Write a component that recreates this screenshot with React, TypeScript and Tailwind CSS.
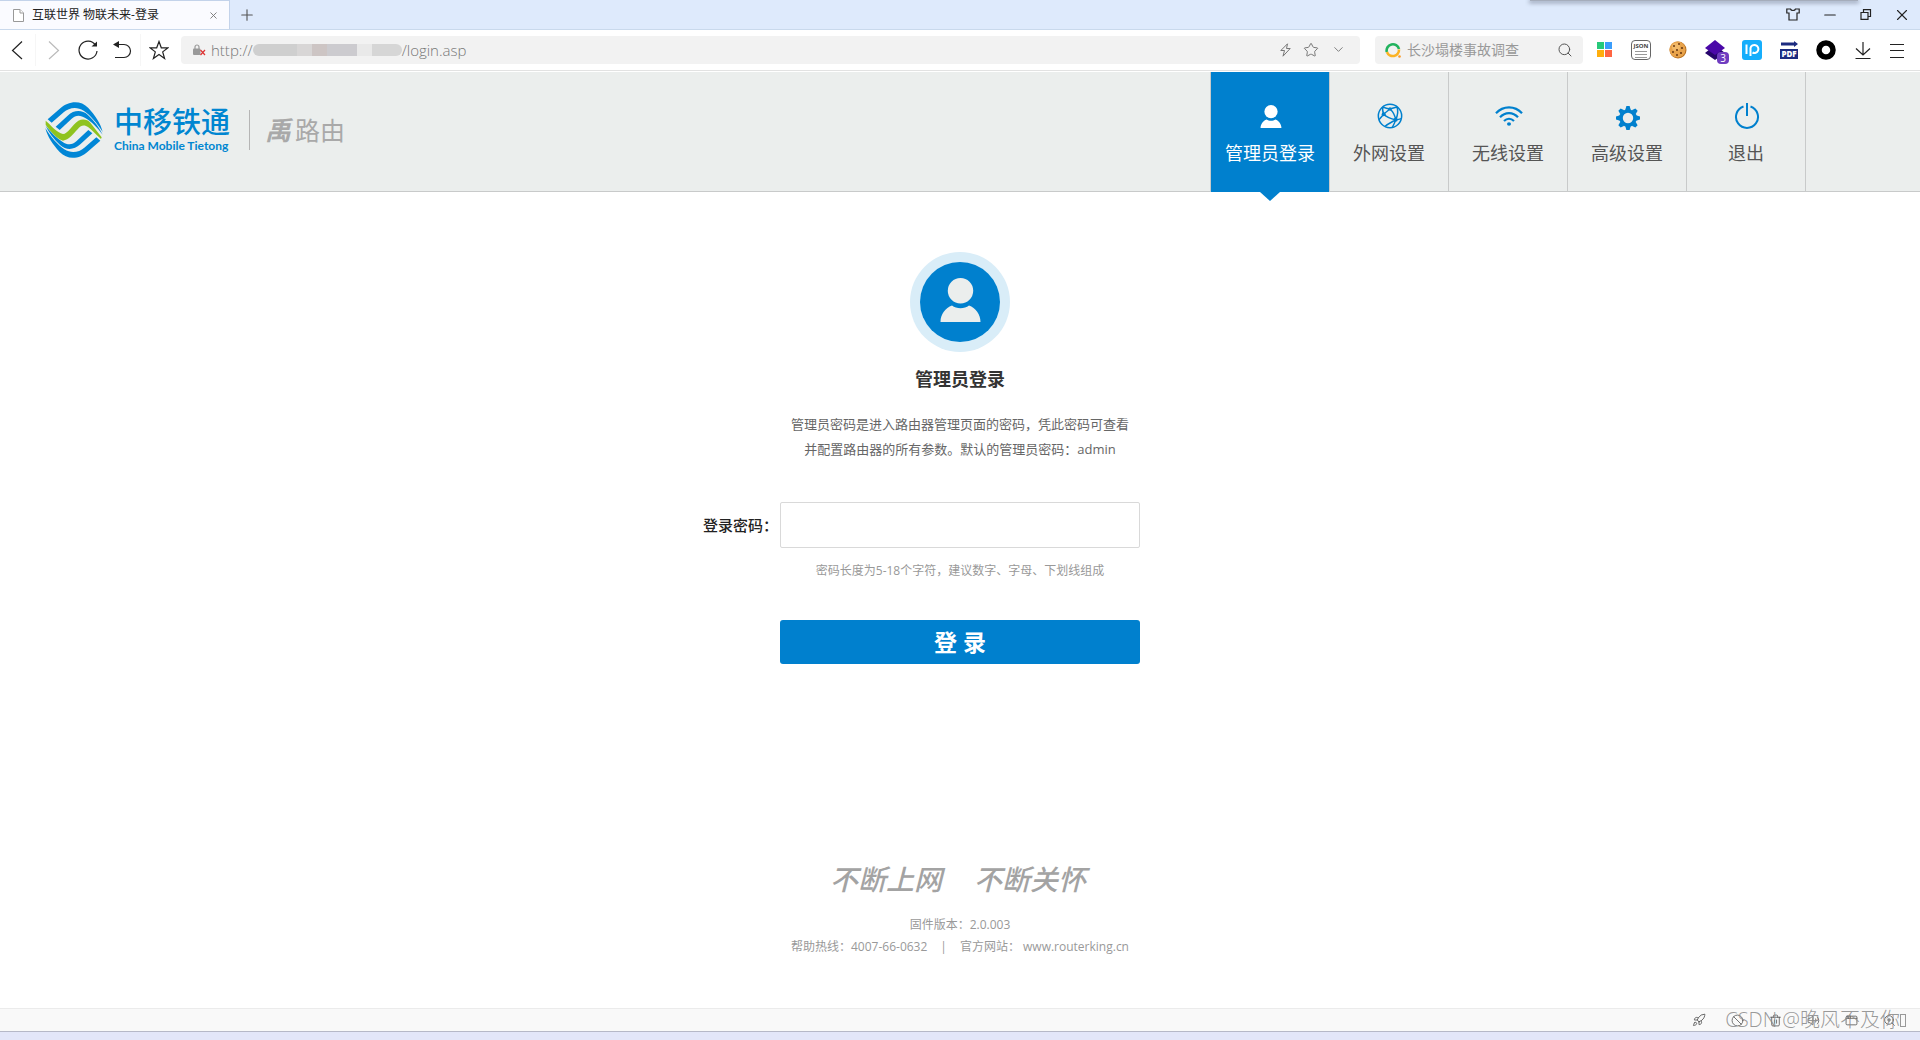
import { ReactNode, useState } from "react";
import { ChevronDown, Minus, Plus, Rocket, Search, Shirt, Star, Trash2, Volume2, X, ZoomIn, AppWindow, Ban } from "lucide-react";

const NAV_ITEMS: { label: string, icon: ReactNode }[] = [
    { label: "管理员登录", icon: <PersonIcon className="w-[22px] h-[23px] text-white" /> },
    { label: "外网设置", icon: <GlobeIcon /> },
    { label: "无线设置", icon: <WifiIcon /> },
    { label: "高级设置", icon: <GearIcon /> },
    { label: "退出", icon: <PowerIcon /> },
];

export default function App() {
    return <div className="min-h-screen flex flex-col bg-white font-['Open_Sans','Noto_Sans_CJK_SC',sans-serif]">
        <TabStrip />
        <Toolbar />
        <SiteHeader />
        <main className="flex-1 flex flex-col pt-[60px]">
            <LoginForm />
            <SiteFooter />
        </main>
        <StatusBar />
    </div>
}

/* Browser chrome */

function TabStrip() {
    return <div className="relative h-[30px] flex items-stretch bg-[#deeafc] border-b border-[#c9d9ec]">
        <div className="w-[230px] flex items-center pl-[13px] pr-[10px] bg-[#fafbff] border-t border-r border-[#c3d3ea]">
            <svg className="w-[11px] h-[13px]" viewBox="0 0 11 13" fill="#fff" stroke="#999">
                <path d="M.5 .5H7L10.500 4V12.500H.5Z" />
                <path d="M7 .5V4H10.500" />
            </svg>
            <span className="ml-2 flex-1 text-xs text-[#222]">互联世界 物联未来-登录</span>
            <button aria-label="关闭标签页"><X size={11} color="#777" strokeWidth={2} /></button>
        </div>
        <button aria-label="新建标签页" className="ml-2"><Plus size={18} color="#555" strokeWidth={1.5} /></button>
        <div className="ml-auto mr-[9px] flex items-center gap-[21px] text-[#222]">
            <button aria-label="皮肤">
                <svg className="w-[14px] h-[13px]" viewBox="0 0 14 13" fill="none" stroke="currentColor" strokeWidth="1.200">
                    <path d="M.8 1H4.500C5 3 9 3 9.500 1H13.200V5H11V12H3V5H.8Z" />
                </svg>
            </button>
            <button aria-label="最小化"><Minus size={18} strokeWidth={1.5} /></button>
            <button aria-label="还原">
                <svg className="w-[12px] h-[11px]" viewBox="0 0 12 11" fill="none" stroke="currentColor" strokeWidth="1.200">
                    <path d="M1 3.500H8V10.400H1ZM3.500 3.500V.6H10.500V7.500H8" />
                </svg>
            </button>
            <button aria-label="关闭"><X size={18} strokeWidth={1.5} /></button>
        </div>
        <div className="absolute top-0 right-[62px] w-[328px] h-px bg-[#a5adbb] shadow-[0_1px_4px_1px_#8d97aa]" />
    </div>
}

function Toolbar() {
    return <div className="h-[42px] pb-px border-b border-white bg-white">
        <div className="h-[41px] flex items-center pl-[7px] pr-[10px] pb-px border-b border-[#e2e2e2]">
            <ToolButton label="后退">
                <path d="M15 1.500L5.500 10.500L15 19" />
            </ToolButton>
            <span className="w-px h-8 mx-2 bg-[#f6f6f6]" />
            <ToolButton label="前进" className="text-[#bbb]">
                <path d="M5 1.500L14.500 10.500L5 19" />
            </ToolButton>
            <span className="w-[14px]" />
            <ToolButton label="刷新">
                <path d="M17.500 5A9 9 0 1 0 19 11" />
                <path d="M19 1.500V6.500H13.500Z" fill="currentColor" stroke="none" />
            </ToolButton>
            <span className="w-[14px]" />
            <ToolButton label="恢复">
                <path d="M4 4.500H12A6.500 6.500 0 0 1 12 17.500H3" />
                <path d="M1 4.500L7 1V8Z" fill="currentColor" stroke="none" />
            </ToolButton>
            <span className="w-px h-8 mx-2 bg-[#f6f6f6]" />
            <ToolButton label="收藏">
                <path d="M10 1.500L12.300 7.800H19L13.700 11.900L15.600 18.500L10 14.600L4.400 18.500L6.300 11.900L1 7.800H7.700Z" />
            </ToolButton>
            <AddressBar />
            <SearchBox />
            <Extensions />
        </div>
    </div>
}

function ToolButton({ label, className, children }: { label: string, className?: string, children: ReactNode }) {
    return <button aria-label={label} className={className ?? "text-[#222]"}>
        <svg className="size-5" viewBox="0 0 20 20" fill="none" stroke="currentColor" strokeWidth="1.200">{children}</svg>
    </button>
}

function AddressBar() {
    return <div className="ml-3 flex-1 h-7 flex items-center pl-3 pr-[14px] rounded-sm bg-[#f2f2f2] text-[#777]">
        <svg className="w-[13px] h-[12px]" viewBox="0 0 13 12">
            <path d="M2 5V3A2 2 0 0 1 6 3V5" fill="none" stroke="#999" strokeWidth="1.200" />
            <rect x="0" y="4.500" width="7.500" height="6.500" rx="1" fill="#999" />
            <path d="M7.500 6L12 11M12 6L7.500 11" stroke="#d33" strokeWidth="1.200" />
        </svg>
        <span className="ml-[5px] text-[15px] leading-7 font-light">http://</span>
        <span className="h-3 w-[149px] flex rounded-md overflow-hidden">
            <span className="flex-[3] bg-[#cfcfcf]" />
            <span className="flex-[1] bg-[#d8d6d6]" />
            <span className="flex-[1] bg-[#cdc5c4]" />
            <span className="flex-[2] bg-[#cccbcf]" />
            <span className="flex-[1] bg-[#e9e9e9]" />
            <span className="flex-[2] bg-[#d6d6d6]" />
        </span>
        <span className="text-[15px] leading-7 font-light">/login.asp</span>
        <span className="ml-auto flex items-center gap-3">
            <svg className="w-[11px] h-[14px]" viewBox="0 0 11 14" fill="none" stroke="currentColor">
                <path d="M7.500 .8L.8 7.500H4.500L3 13.200L10.200 5.500H6.500Z" />
            </svg>
            <Star size={16} strokeWidth={1.5} />
            <ChevronDown size={15} strokeWidth={1.5} />
        </span>
    </div>
}

function SearchBox() {
    return <div className="ml-[15px] w-[208px] h-7 flex items-center pl-[10px] pr-[10px] rounded-sm bg-[#f2f2f2]">
        <svg className="w-4 h-4" viewBox="0 0 16 16" fill="none" strokeWidth="2.600">
            <path d="M1.800 10A6.200 6.200 0 1 1 14 7" stroke="#22b35e" />
            <path d="M14 7.500A6.200 6.200 0 0 1 2 10" stroke="#fbb324" />
            <circle cx="14.500" cy="14.500" r="1.300" fill="#fb9a24" />
        </svg>
        <input
            aria-label="搜索" placeholder="长沙塌楼事故调查"
            className="ml-[6px] flex-1 min-w-0 bg-transparent outline-none text-sm placeholder:text-[#999]"
        />
        <Search size={16} color="#555" strokeWidth={1.5} />
    </div>
}

function Extensions() {
    return <div className="ml-[11px] flex items-center gap-[17px]">
        <button aria-label="应用" className="size-5 flex items-center justify-center">
            <svg className="size-[15px]" viewBox="0 0 15 15">
                <path d="M0 0H7V7H0Z" fill="#27c97a" />
                <path d="M8 0H15V7H8Z" fill="#3b9dfb" />
                <path d="M0 8H7V15H0Z" fill="#ffae0d" />
                <path d="M8 8H15V15H8Z" fill="#ff6542" />
            </svg>
        </button>
        <button aria-label="JSON" className="size-5 flex flex-col items-center gap-[2px] pt-[2px] rounded border border-[#666] text-[#444]">
            <span className="text-[6px] leading-[6px] font-bold">JSON</span>
            <span className="w-3 h-px bg-[#999]" />
            <span className="w-3 h-px bg-[#999]" />
            <span className="w-3 h-px bg-[#999]" />
        </button>
        <button aria-label="Cookie">
            <svg className="size-5" viewBox="0 0 20 20">
                <circle cx="10" cy="10" r="8.500" fill="#b9701f" />
                <circle cx="9.500" cy="9.500" r="8" fill="#e8a34b" />
                <circle cx="8" cy="7" r="4" fill="#f2b968" />
                <g fill="#6b3a12">
                    <circle cx="6" cy="6" r="1" />
                    <circle cx="11" cy="4" r="1" />
                    <circle cx="14" cy="8" r="1.100" />
                    <circle cx="9" cy="10" r="1.100" />
                    <circle cx="5" cy="12" r="1" />
                    <circle cx="13" cy="13" r="1.100" />
                    <circle cx="9" cy="15" r="1" />
                </g>
            </svg>
        </button>
        <button aria-label="图层" className="relative">
            <svg className="size-5" viewBox="0 0 20 20">
                <path d="M10 5L20 13L10 20L0 13Z" fill="#26056b" />
                <path d="M10 0L20 8L10 15L0 8Z" fill="#4a08a8" />
            </svg>
            <span className="absolute top-3 left-3 w-3 h-3 rounded-sm bg-[#6f3cc0] text-white text-[10px] leading-3 text-center">3</span>
        </button>
        <button aria-label="IP">
            <svg className="size-5" viewBox="0 0 20 20" fill="none" stroke="#fff" strokeWidth="2">
                <rect width="20" height="20" rx="3" fill="#16aefc" stroke="none" />
                <path d="M4.500 4.500V14M8.500 16V8A4 4 0 1 1 10.500 12.500" />
            </svg>
        </button>
        <button aria-label="PDF" className="size-5 flex flex-col items-center justify-between py-px">
            <svg className="w-[17px] h-[6px]" viewBox="0 0 17 6">
                <path d="M0 1.500H13V0L17 3L13 6V4.500H0Z" fill="#1c2b80" />
            </svg>
            <span className="w-[18px] h-[10px] bg-[#1c2b80] text-white text-[8px] leading-[10px] font-extrabold text-center">PDF</span>
        </button>
        <button aria-label="录制">
            <svg className="size-5" viewBox="0 0 20 20">
                <circle cx="10" cy="10" r="7" fill="none" stroke="#000" strokeWidth="5.500" />
            </svg>
        </button>
        <ToolButton label="下载">
            <path d="M10 2V15M3 8.500L10 15L17 8.500M2.500 18.500H17.500" />
        </ToolButton>
        <ToolButton label="菜单">
            <path d="M0 4.500H14M0 10.500H14M0 17.500H14" />
        </ToolButton>
    </div>
}

function StatusBar() {
    return <div className="relative">
        <div className="h-6 flex items-center justify-end gap-[25px] pr-6 bg-[#f9f9f9] border-t border-[#ebebeb] border-b border-b-[#b6b8c8] text-[#555]">
            <button aria-label="加速"><Rocket size={14} strokeWidth={1.5} /></button>
            <button aria-label="拦截"><Ban size={13} strokeWidth={1.5} /></button>
            <button aria-label="清理"><Trash2 size={13} strokeWidth={1.5} /></button>
            <button aria-label="静音"><Volume2 size={13} strokeWidth={1.5} /></button>
            <button aria-label="窗口"><AppWindow size={13} strokeWidth={1.5} /></button>
            <button aria-label="缩放"><ZoomIn size={13} strokeWidth={1.5} /></button>
        </div>
        <div className="h-2 bg-[#e3e6f9]" />
        <div className="absolute top-0 right-[14px] h-6 flex items-center text-xl leading-6 font-light text-[#888]/85 whitespace-nowrap">
            <span>CSDN @晚风不及你</span>
            <span className="w-[6px] h-[13px] border border-[#999]" />
        </div>
    </div>
}

/* Router page */

function SiteHeader() {
    return <header className="h-[120px] flex justify-between bg-[#ebeeed] border-b border-[#c8caca]">
        <div className="flex items-center pl-[45px] pb-[3px]">
            <TietongMark />
            <div className="ml-[11px] w-[116px] text-[#0086d1]">
                <div className="text-[29px] leading-8 font-medium whitespace-nowrap">中移铁通</div>
                <div className="text-xs leading-4 font-bold whitespace-nowrap font-['Lato',sans-serif]">China Mobile Tietong</div>
            </div>
            <span className="ml-[19px] w-px h-10 bg-[#b5b5b5]" />
            <div className="ml-[15px] flex items-center gap-1 text-[#a9a9a9]">
                <span className="text-[26px] leading-8 font-bold italic">禹</span>
                <span className="text-[25px] leading-8">路由</span>
            </div>
        </div>
        <nav className="mr-[114px] flex border-r border-[#c8caca]">
            { NAV_ITEMS.map((item, i) => <NavItem key={item.label} label={item.label} icon={item.icon} active={i === 0} />) }
        </nav>
    </header>
}

function NavItem({ label, icon, active }: { label: string, icon: ReactNode, active: boolean }) {
    return <a
        href="#"
        className={`relative w-[119px] flex flex-col items-center pt-[30px] border-l border-[#c8caca] text-lg ${active ? "h-[120px] bg-[#0080ce] text-white" : "text-[#555]"}`}
    >
        <span className="h-7 flex items-center pl-[2px] text-[#0080ce]">{icon}</span>
        <span className="mt-[10px] leading-[26px] whitespace-nowrap">{label}</span>
        { active && <svg className="absolute top-full left-1/2 -translate-x-1/2 w-5 h-[9px]" viewBox="0 0 20 9">
            <path d="M0 0H20L10 9Z" fill="#0080ce" />
        </svg> }
    </a>
}

function LoginForm() {
    const [ password, setPassword ] = useState("");

    return <form className="flex flex-col items-center" onSubmit={event => event.preventDefault()}>
        <div className="size-[100px] rounded-full bg-[#d9edf8] flex items-center justify-center">
            <div className="size-20 rounded-full bg-[#0080ce] flex items-center justify-center pb-1">
                <PersonIcon className="w-[41px] h-[44px] text-[#ebeeed]" />
            </div>
        </div>
        <h1 className="mt-[13px] text-lg leading-7 font-bold text-[#333]">管理员登录</h1>
        <p className="mt-[19px] text-[13px] leading-[25px] text-center text-[#666]">
            管理员密码是进入路由器管理页面的密码，凭此密码可查看<br />
            并配置路由器的所有参数。默认的管理员密码：admin
        </p>
        <div className="mt-10 w-full grid grid-cols-[1fr_360px_1fr] items-center">
            <label htmlFor="password" className="pr-[2px] text-right text-[15px] font-medium text-[#222]">登录密码：</label>
            <input
                id="password" type="password"
                className="w-full h-[46px] px-3 rounded-xs border border-[#d9d9d9] outline-none"
                value={password} onChange={event => setPassword(event.target.value)}
            />
        </div>
        <p className="mt-[13px] text-xs leading-5 text-[#999]">密码长度为5-18个字符，建议数字、字母、下划线组成</p>
        <button type="submit" className="mt-[39px] w-[360px] h-11 rounded-[3px] bg-[#0080ce] text-white text-[23px] font-bold">登 录</button>
    </form>
}

function SiteFooter() {
    return <footer className="mt-auto pt-10 pb-[50px] flex flex-col items-center text-xs leading-[22px] text-[#999]">
        <div className="mb-[21px] flex gap-8 pr-1 text-[28px] leading-7 font-medium italic text-[#a3a3a3]">
            <span>不断上网</span>
            <span>不断关怀</span>
        </div>
        <div>固件版本：2.0.003</div>
        <div className="flex">
            <span>帮助热线：4007-66-0632</span>
            <span className="mx-[13px]">|</span>
            <span>官方网站： <a href="#">www.routerking.cn</a></span>
        </div>
    </footer>
}

/* Drawings */

function TietongMark() {
    const bands = <>
        <path d="M38 88L76 55C98 34 136 28 160 54C180 76 197 100 203 126C187 100 165 74 146 62C124 48 101 54 86 67L50 98Z" />
        <path d="M62 110L98 77C118 58 142 60 158 74C178 92 194 114 203 134C186 112 168 94 152 85C136 74 122 75 110 86L74 120Z" />
    </>;

    return <svg className="w-[58px] h-14" viewBox="30 36 174 168">
        <g fill="#0086d6">
            {bands}
            <g transform="rotate(180 117 120)">{bands}</g>
        </g>
        <path d="M32 92C48 106 66 128 84 132C98 132 112 104 130 92C144 85 158 89 166 98L200 142L198 147C184 134 170 120 160 112C146 102 136 108 128 118C114 132 102 150 84 152C70 150 44 122 32 104Z" fill="#8fc31f" />
    </svg>
}

function PersonIcon({ className }: { className: string }) {
    return <svg className={className} viewBox="0 0 40 44" fill="currentColor">
        <circle cx="20" cy="12.700" r="12.700" />
        <path d="M0 44C0 36 5 30 11.500 27.500C16 31 24 31 28.500 27.500C35 30 40 36 40 44Z" />
    </svg>
}

function GlobeIcon() {
    return <svg className="size-[26px]" viewBox="0 0 78 78" fill="none" stroke="currentColor" strokeWidth="4.500">
        <circle cx="39" cy="39" r="35" />
        <path d="M17 13C26 15 34 17 39 18C46 16 54 13 60 12M39 18C32 24 25 28 20 34C15 40 10 46 6 50M17 13C16 20 18 28 20 34M39 18C48 26 54 38 56 50M20 34C30 44 42 48 56 50C63 50 68 49 73 47M56 50C48 56 36 60 24 70M56 50C54 58 50 66 46 73M60 12C64 24 62 38 56 50" />
        <g fill="currentColor" stroke="none">
            <circle cx="39" cy="18" r="5" />
            <circle cx="20" cy="34" r="6" />
            <circle cx="56" cy="50" r="6" />
        </g>
    </svg>
}

function WifiIcon() {
    return <svg className="w-7 h-5" viewBox="0 0 84 60" fill="none" stroke="currentColor" strokeWidth="6.500">
        <path d="M3 22C24 -2 60 -2 81 22" />
        <path d="M15 34C30 17 54 17 69 34" />
        <path d="M27 45C36 36 48 36 57 45" />
        <ellipse cx="42" cy="54" rx="6" ry="5" fill="currentColor" stroke="none" />
    </svg>
}

function GearIcon() {
    return <svg className="mt-1 size-6" viewBox="-12 -12 24 24" fill="currentColor">
        <circle r="7" fill="none" stroke="currentColor" strokeWidth="3.600" />
        { [ 0, 45, 90, 135, 180, 225, 270, 315 ].map(
            angle => <path key={angle} d="M-2.800 -8L-1.600 -12H1.600L2.800 -8Z" transform={`rotate(${angle})`} />
        ) }
    </svg>
}

function PowerIcon() {
    return <svg className="size-[26px]" viewBox="0 0 26 26" fill="none" stroke="currentColor" strokeWidth="2">
        <path d="M9.500 3.500A11 11 0 1 0 16.500 3.500" />
        <path d="M13 0V13" />
    </svg>
}
